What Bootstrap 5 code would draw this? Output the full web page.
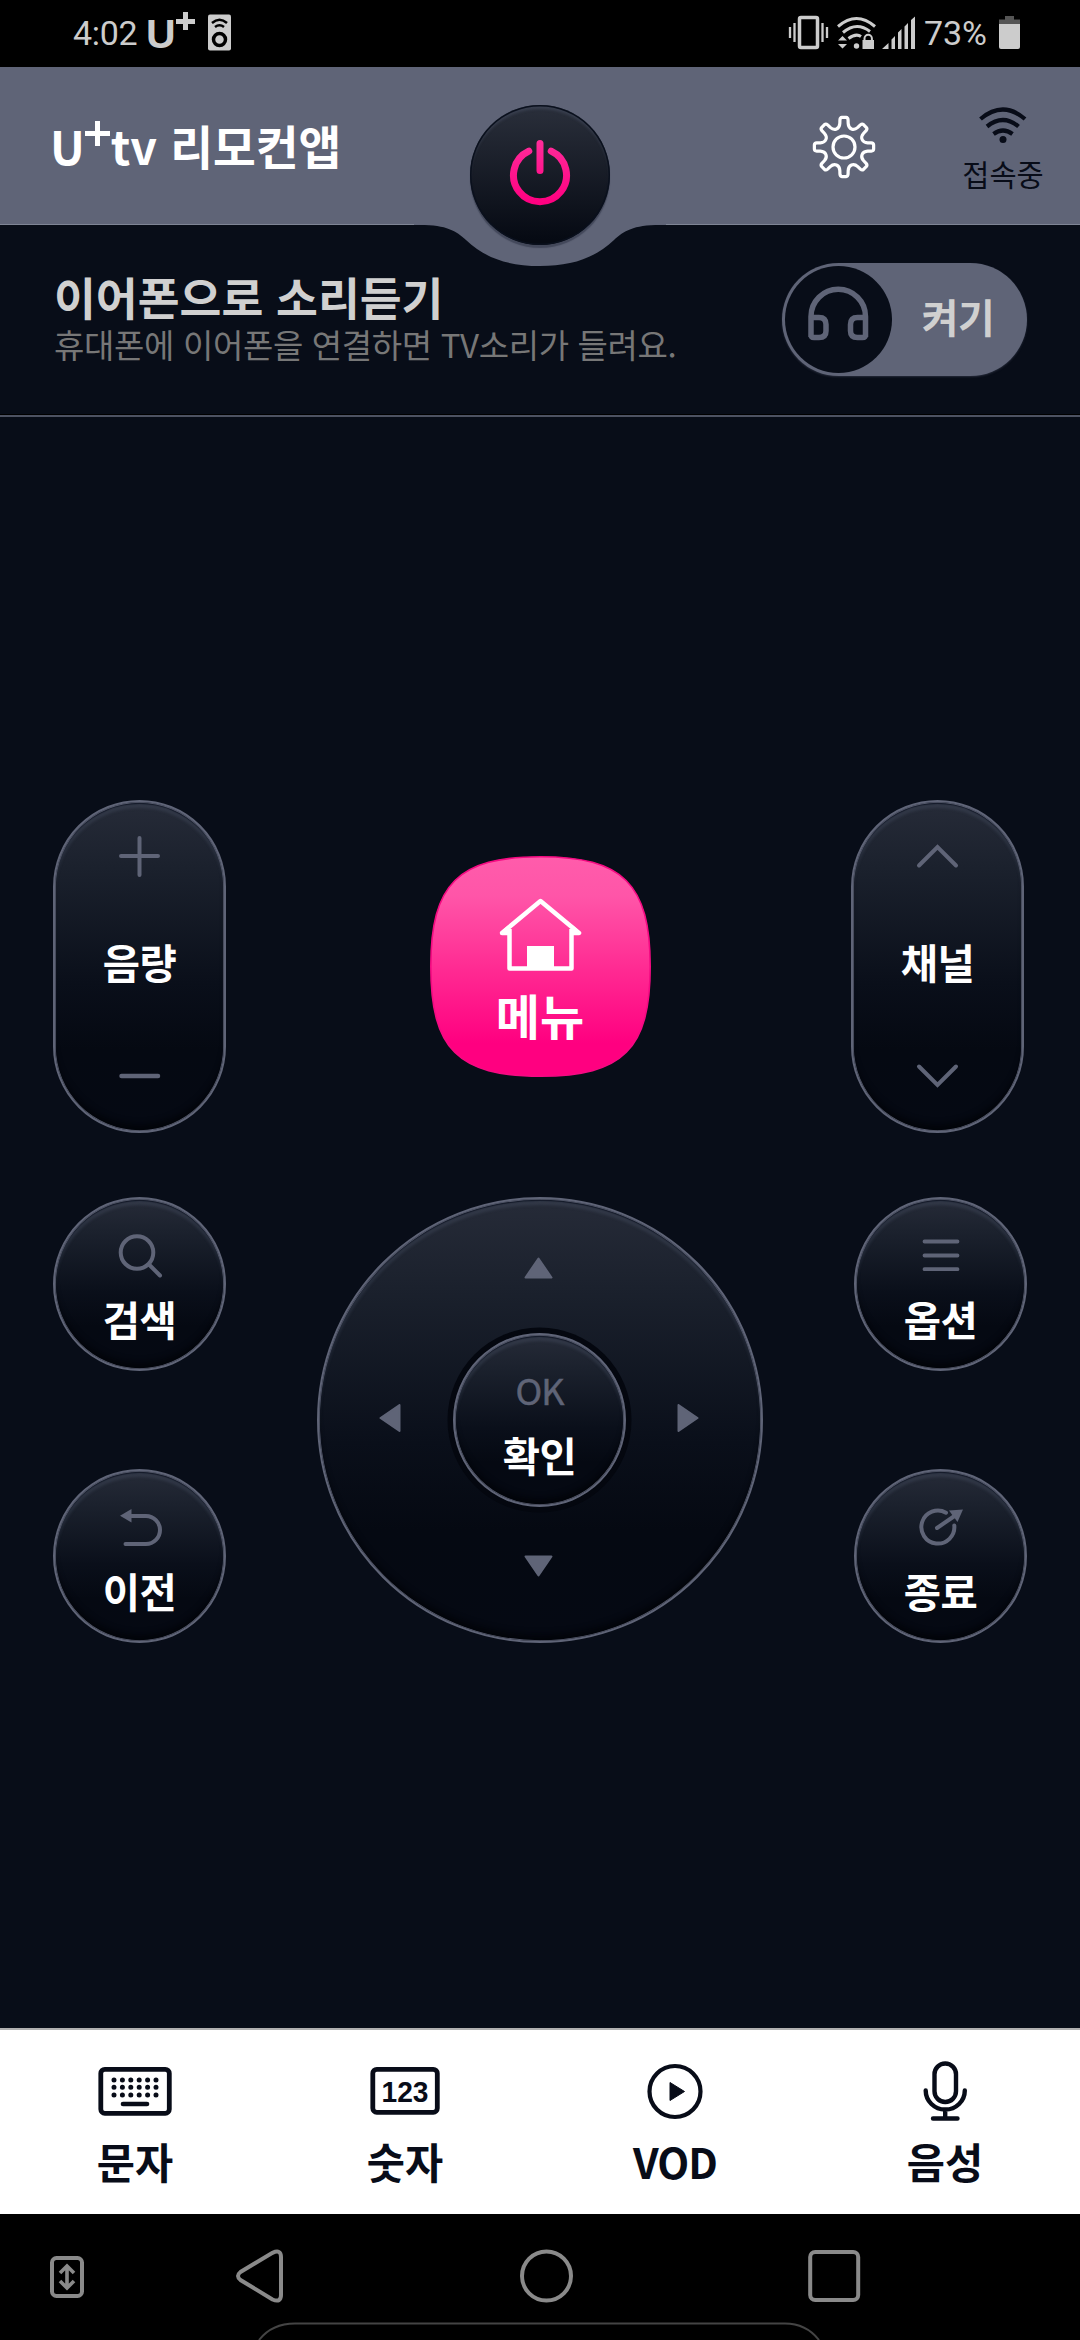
<!DOCTYPE html>
<html lang="ko">
<head>
<meta charset="utf-8">
<meta name="viewport" content="width=device-width, initial-scale=1">
<title>U+tv 리모컨앱</title>
<link href="https://cdn.jsdelivr.net/npm/bootstrap@5.3.0/dist/css/bootstrap.min.css" rel="stylesheet">
<style>
:root{--slate:#5f6477;--night:#080d18;--ink:#080c18}
body{width:1080px;height:2340px;overflow:hidden;background:var(--night);color:#fff;font-family:"Noto Sans CJK KR","Noto Sans",sans-serif}
svg{display:block;flex:none}
.statusbar{height:67px;background:#000;color:#ccc;font-family:Roboto,sans-serif;font-size:34px;line-height:66px;padding-left:73px}
.clock{width:65px;letter-spacing:-.3px}
.brand-u{font-family:"Liberation Sans",sans-serif;font-weight:700;font-size:41px;line-height:68px;width:29px;margin-left:8px}
.speaker{margin-left:13px}
.pct{width:66px;margin-left:6px;letter-spacing:-.1px}
.battery{margin:0 60px 0 9px}
.topbar{height:158px;background:var(--slate);border-bottom:1px solid #7f8595;padding-left:50px}
.app-title{font-size:46.5px;font-weight:700;line-height:60px;width:421px;margin-top:48px}
.notch{position:absolute;left:414px;top:156px;z-index:1}
.power{position:absolute;left:470px;top:38px;width:140px;height:140px;border:0;padding:0;z-index:2;border-radius:50%;background:linear-gradient(#2a2f3b,#060a13 96%);box-shadow:inset 0 0 0 1.5px #0a101d,inset 0 4px 3px rgba(90,98,120,.35),0 3px 1px rgba(48,54,72,.6)}
.gearbox{margin-left:341px;margin-top:48px}
.conn{width:100px;margin-left:77px;margin-top:40px;color:var(--ink)}
.conn span{font-size:29.5px;line-height:36px;margin-top:12px}
.earbar{height:192px;padding:38px 53px 0 54px;border-bottom:2px solid #4d5262;box-shadow:inset 0 -1px #000}
.ear-title{font-size:45.5px;font-weight:700;line-height:46px;color:#d0d0d0;margin-top:10px;white-space:nowrap}
.ear-sub{font-size:33px;line-height:36px;letter-spacing:-.36px;color:#777;white-space:nowrap;margin-top:7px}
.toggle{width:245px;height:113px;padding:3px;border-radius:57px;background:var(--slate);color:#d0d0d0;box-shadow:0 1px 2px #252a39}
.knob{width:107px;height:107px;border-radius:50%;background:var(--night)}
.toggle b{font-size:40px;font-weight:700;width:132px;line-height:101px;letter-spacing:-.5px}
.remote{height:1611px;padding:383px 53px 0}
.key{border:2px solid var(--slate);color:#fff;padding:0;background:linear-gradient(#262b38,#1b212d 20%,#0a0f1a 55%,#050912 75%,#050913);box-shadow:inset 0 0 0 .8px #555a6c,inset 0 2px 1px #141a29,inset 0 6px 3px rgba(80,88,110,.3),inset 0 -9px 6px -3px #020409;font-size:40.5px;font-weight:700;line-height:50px;letter-spacing:-.6px}
.pill{width:173px;height:333px;border-radius:87px;padding-top:25px}
.pill span{margin:50px 0 59px}
.round{width:173px;height:174px;border-radius:50%;padding-top:26px}
.round span{margin-top:9px}
.side-left{width:173px}.side-right{width:176px}
.center-col{margin-left:3px}
.gap-a{margin-top:64px}.gap-b{margin-top:98px}
.menukey{position:relative;width:221px;height:221px;margin:56px 0 120px;border:0;background:none;color:#fff;padding:39px 0 0}
.menukey .face{position:absolute;inset:0}
.menukey span{position:relative;font-size:48px;font-weight:700;line-height:56px;margin-top:13px}
.menukey .house{position:relative}
.dpad{width:446px;height:446px;border-radius:50%}
.dpad .mid{width:100%;padding:5px 59px 0 58px}
.tri-up{margin-top:56px}.tri-down{margin-bottom:62px}
.okkey{box-shadow:inset 0 0 0 .8px #555a6c,inset 0 2px 1px #141a29,inset 0 6px 3px rgba(80,88,110,.3),inset 0 -9px 6px -3px #020409,0 0 0 5.5px #04070f;width:173px;height:174px;border-radius:50%;padding-top:29px}
.okkey i{font-style:normal;font-weight:400;font-size:36px;color:var(--slate);line-height:50px;letter-spacing:-1px;-webkit-text-stroke:.5px var(--slate)}
.okkey span{margin-top:16px}
.tabs{height:186px;background:#fff;border-top:2px solid #b0b0b0;color:var(--ink)}
.tab-i{padding-top:29px}
.tab-i span{font-size:41.5px;font-weight:700;line-height:60px;margin-top:8px}
.tab-i .vod{letter-spacing:-1px}
.sysnav{height:126px;background:#000}
.sysrow{height:107px;padding:17px 0 0 49px}
</style>
<script src="https://cdn.jsdelivr.net/npm/bootstrap@5.3.0/dist/js/bootstrap.bundle.min.js"></script>
</head>
<body class="d-flex flex-column">

<header class="statusbar d-flex flex-shrink-0">
  <span class="clock">4:02</span>
  <span class="brand-u">U</span>
  <svg width="20" height="67" viewBox="175 0 20 67"><path d="M176 21.500H195M185.500 12V30" stroke="#ccc" stroke-width="5"/></svg>
  <svg class="speaker" width="23" height="67" viewBox="208 0 23 67">
    <rect x="208" y="14.500" width="23" height="36" rx="2" fill="#ccc"/>
    <g fill="none" stroke="#000" stroke-width="2.500"><path d="M212 23Q219.500 16.500 227 23M215 27Q219.500 23.500 224 27"/><circle cx="219.500" cy="39.500" r="6" stroke-width="3.500"/></g>
  </svg>
  <svg class="ms-auto" width="130" height="67" viewBox="788 0 130 67">
    <rect x="799.500" y="17.500" width="18" height="30" rx="1.500" fill="none" stroke="#ccc" stroke-width="3.500"/>
    <path d="M790 27V38M794.500 23V42M822.500 23V42M827 27V38" stroke="#ccc" stroke-width="2.300"/>
    <g fill="none" stroke="#ccc" stroke-width="3"><path d="M838 26.500Q856.500 10.500 875 26.500M843 32.500Q856.500 21 870 31.500M848.500 38.500Q856 33 861 36.500"/></g>
    <circle cx="856.500" cy="46" r="2.700" fill="#ccc"/>
    <path d="M838 40.500L842.500 36L847 40.500ZM838 44L842.500 48.500L847 44ZM862.500 40H874V49H862.500Z" fill="#ccc"/>
    <path d="M864.500 41V38.500a3.700 3.700 0 0 1 7.400 0V41" fill="none" stroke="#ccc" stroke-width="2"/>
    <path d="M882 49L888.500 43V49ZM891.500 49V39.500L895 36V49ZM898 49V32.500L901.500 29V49ZM904.500 49V26.500L908 23V49ZM911 49V20L915 16.500V49Z" fill="#ccc"/>
  </svg>
  <span class="pct">73%</span>
  <svg class="battery" width="21" height="67" viewBox="999 0 21 67"><path d="M999 24V19.500H1005V16H1014V19.500H1020V24Z" fill="#555"/><path d="M999 24H1020V47q0 2-2 2H1001q-2 0-2-2Z" fill="#ccc"/></svg>
</header>

<nav class="topbar position-relative d-flex flex-shrink-0">
  <h1 class="app-title d-flex mb-0"><span>U</span><svg width="26" height="60" viewBox="86 115 26 60"><path d="M86 133.500H111M98.500 121V146" stroke="#fff" stroke-width="5"/></svg><span>tv 리모컨앱</span></h1>
  <svg class="notch" width="252" height="46" viewBox="414 223 252 46"><path d="M414 222V225H420C447 225 456 231 466 240C485 258 508 266 540 266S595 258 614 240C624 231 633 225 660 225H666V222Z" fill="#5f6477"/></svg>
  <button class="power" aria-label="전원">
    <svg width="140" height="140" viewBox="470 105 140 140"><defs><linearGradient id="pk" gradientUnits="userSpaceOnUse" x1="0" x2="0" y1="140" y2="203"><stop stop-color="#ff2d9b"/><stop offset="1" stop-color="#ff0080"/></linearGradient></defs>
    <path d="M528.800 151.200A26.500 26.500 0 1 0 551.200 151.200M540 143.500V170.500" fill="none" stroke="url(#pk)" stroke-width="7" stroke-linecap="round"/></svg>
  </button>
  <svg class="gearbox" width="64" height="64" viewBox="-32 -32 64 64" fill="none" stroke="#fff" stroke-width="3.200">
    <circle r="11"/>
    <path id="gear" stroke-linejoin="round"/>
  </svg>
  <div class="conn d-flex flex-column align-items-center">
    <svg width="50" height="36" viewBox="976 107.500 50 36" fill="none" stroke="#080c18" stroke-width="4.200"><path d="M978.500 119.500Q1001 100.500 1023 119.500M985 127Q1001 114 1016.500 127M991.500 134.500Q1001 127.500 1010.500 134.500"/><circle cx="1001" cy="140" r="3.500" fill="#080c18" stroke="none"/></svg>
    <span>접속중</span>
  </div>
</nav>

<section class="earbar d-flex justify-content-between flex-shrink-0">
  <div><div class="ear-title">이어폰으로 소리듣기</div><div class="ear-sub">휴대폰에 이어폰을 연결하면 TV소리가 들려요.</div></div>
  <div class="toggle d-flex">
    <div class="knob"><svg width="107" height="107" viewBox="785 266 107 107" fill="none" stroke="#5f6477" stroke-width="5.500"><path d="M811 337V316.500A27 27 0 0 1 865.500 316.500V337M811 317.500H819Q826 317.500 826 324.500V331Q826 337.500 819 337.500H814Q811 337.500 811 334.500M865.500 317.500H857.500Q850.500 317.500 850.500 324.500V331Q850.500 337.500 857.500 337.500H862.500Q865.500 337.500 865.500 334.500"/></svg></div>
    <b class="text-center">켜기</b>
  </div>
</section>

<main class="remote d-flex justify-content-between align-items-start flex-shrink-0">
  <div class="side-left d-flex flex-column align-items-start">
    <button class="key pill d-flex flex-column align-items-center"><svg width="60" height="60" viewBox="-30 -30 60 60"><path d="M-19-1H18M-.5-19V18" stroke="#5f6477" stroke-width="4" stroke-linecap="round"/></svg><span>음량</span><svg width="60" height="60" viewBox="-30 -30 60 60"><path d="M-18.500 0H18" stroke="#5f6477" stroke-width="4.500" stroke-linecap="round"/></svg></button>
    <button class="key round gap-a d-flex flex-column align-items-center"><svg width="60" height="60" viewBox="109.500 1225 60 60" fill="none" stroke="#5f6477" stroke-width="4" stroke-linecap="round"><circle cx="136.500" cy="1252.500" r="16.300"/><path d="M148.500 1264.500L159.500 1275.500"/></svg><span>검색</span></button>
    <button class="key round gap-b d-flex flex-column align-items-center"><svg width="60" height="60" viewBox="109.500 1497 60 60" fill="none" stroke="#5f6477" stroke-width="4" stroke-linecap="round"><path d="M129 1516H145.500A14 14 0 0 1 145.500 1544H125"/><path d="M119.500 1515.700L131 1509V1522.500Z" fill="#5f6477" stroke="none"/></svg><span>이전</span></button>
  </div>

  <div class="center-col d-flex flex-column align-items-center">
    <button class="menukey d-flex flex-column align-items-center">
      <svg class="face" width="221" height="221" viewBox="0 0 221 221"><defs><linearGradient id="mg" x1="0" x2="0" y1="0" y2="1"><stop stop-color="#ff5cab"/><stop offset=".18" stop-color="#ff55a8"/><stop offset=".5" stop-color="#ff2c93"/><stop offset=".85" stop-color="#ff0080"/></linearGradient></defs><path d="M.8 110.500C.8 28 28 .8 110.500 .8S220.200 28 220.200 110.500S193 220.200 110.500 220.200S.8 193 .8 110.500Z" fill="url(#mg)" stroke="#f50a82" stroke-width="1.600"/></svg>
      <svg class="house" width="84" height="78" viewBox="497 895 84 78" fill="none" stroke="#fff" stroke-width="4.500" stroke-linejoin="round"><path d="M508.500 929V968.500H570.500V929M508.500 933H501L539.500 901L578 933H570.500"/><path d="M499 933L508 925V934H500ZM580 933L571 925V934H579Z" fill="#fff" stroke-width="1"/><path d="M526 946H553V968H526Z" fill="#fff" stroke="none"/></svg>
      <span>메뉴</span>
    </button>
    <div class="key dpad d-flex flex-column align-items-center justify-content-between" role="group">
      <svg class="tri-up" width="32" height="26" viewBox="-14.500 -13 32 26"><path d="M0-9.500L13 9.500H-13Z" fill="#5f6477" stroke="#5f6477" stroke-width="2" stroke-linejoin="round"/></svg>
      <div class="mid d-flex justify-content-between align-items-center">
        <svg width="26" height="32" viewBox="-13 -14 26 32"><path d="M-9.500 0L9.500-13V13Z" fill="#5f6477" stroke="#5f6477" stroke-width="2" stroke-linejoin="round"/></svg>
        <button class="key okkey d-flex flex-column align-items-center"><i>OK</i><span>확인</span></button>
        <svg width="26" height="32" viewBox="-12 -14 26 32"><path d="M9.500 0L-9.500-13V13Z" fill="#5f6477" stroke="#5f6477" stroke-width="2" stroke-linejoin="round"/></svg>
      </div>
      <svg class="tri-down" width="32" height="26" viewBox="-14.500 -13 32 26"><path d="M0 9.500L13-9.500H-13Z" fill="#5f6477" stroke="#5f6477" stroke-width="2" stroke-linejoin="round"/></svg>
    </div>
  </div>

  <div class="side-right d-flex flex-column align-items-end">
    <button class="key pill d-flex flex-column align-items-center align-self-start"><svg width="60" height="60" viewBox="-30 -30 60 60"><path d="M-19 8.500L-.5-10L18 8.500" fill="none" stroke="#5f6477" stroke-width="4" stroke-linecap="round"/></svg><span>채널</span><svg width="60" height="60" viewBox="-30 -30 60 60"><path d="M-19-9.500L-.5 9L18-9.500" fill="none" stroke="#5f6477" stroke-width="4" stroke-linecap="round"/></svg></button>
    <button class="key round gap-a d-flex flex-column align-items-center"><svg width="60" height="60" viewBox="910.500 1225 60 60"><path d="M924 1241.500H957M924 1255.500H957M924 1269.200H957" stroke="#5f6477" stroke-width="3.800" stroke-linecap="round"/></svg><span>옵션</span></button>
    <button class="key round gap-b d-flex flex-column align-items-center"><svg width="60" height="60" viewBox="910.500 1497 60 60" fill="none" stroke="#5f6477" stroke-width="4" stroke-linecap="round"><path d="M945.500 1512.700A16.500 16.500 0 1 0 953.800 1525.500M936.500 1528L954 1516"/><path d="M962.500 1509.500L948.500 1510.500L957 1522Z" fill="#5f6477" stroke="none"/></svg><span>종료</span></button>
  </div>
</main>

<footer class="tabs flex-shrink-0"><div class="row g-0">
  <div class="col tab-i d-flex flex-column align-items-center"><svg width="74" height="64" viewBox="98 2059 74 64"><rect x="100.800" y="2069.300" width="68.500" height="44" rx="4" fill="none" stroke="#080c18" stroke-width="4.800"/><path d="M114 2080H160M114 2087.200H160M114 2095H160" stroke="#080c18" stroke-width="5" stroke-linecap="round" stroke-dasharray="0 8.400"/><path d="M123 2104H147" stroke="#080c18" stroke-width="4.600" stroke-linecap="round"/></svg><span>문자</span></div>
  <div class="col tab-i d-flex flex-column align-items-center"><svg width="70" height="64" viewBox="369.500 2059 70 64"><rect x="372.300" y="2069.300" width="64.500" height="43" rx="4" fill="none" stroke="#080c18" stroke-width="4.800"/><text x="404.500" y="2101.500" text-anchor="middle" textLength="47" lengthAdjust="spacingAndGlyphs" font-family="Liberation Sans" font-weight="700" font-size="30" fill="#080c18">123</text></svg><span>숫자</span></div>
  <div class="col tab-i d-flex flex-column align-items-center"><svg width="60" height="64" viewBox="645 2059 60 64"><circle cx="675" cy="2091.500" r="25.500" fill="none" stroke="#080c18" stroke-width="4.200"/><path d="M670 2082.500L684.500 2091.500L670 2100.500Z" fill="#080c18" stroke="#080c18" stroke-width="1" stroke-linejoin="round"/></svg><span class="vod">VOD</span></div>
  <div class="col tab-i d-flex flex-column align-items-center"><svg width="60" height="64" viewBox="915 2059 60 64" fill="none" stroke="#080c18" stroke-width="4.400" stroke-linecap="round"><rect x="934.500" y="2063.500" width="21.500" height="38.500" rx="10.700"/><path d="M925.700 2090.500A19.500 19 0 0 0 964.800 2090.500M945.200 2110V2118M933 2118.500H957.500"/></svg><span>음성</span></div>
</div></footer>

<div class="sysnav flex-shrink-0">
  <div class="sysrow">
    <svg width="815" height="88" viewBox="49 2231 815 88" fill="none" stroke="#8a8a8a" stroke-width="4">
      <rect x="52" y="2258" width="30" height="38" rx="4.500"/><path d="M67 2267V2287M60 2273L67 2266L74 2273M60 2281L67 2288L74 2281" stroke-width="3.600"/>
      <path d="M272.500 2252.800Q281 2249 281 2257V2295Q281 2303 272.500 2299.500L240.500 2280Q235.500 2276 240.500 2272Z"/>
      <circle cx="546.500" cy="2276" r="24.500"/>
      <rect x="810.200" y="2252" width="48" height="48" rx="5"/>
    </svg>
  </div>
  <svg width="1080" height="19" viewBox="0 2321 1080 19"><path d="M259 2340Q272 2323.500 295 2323.500H785Q806 2323.500 819 2340" fill="none" stroke="#444" stroke-width="2"/></svg>
</div>

<script>
/* Eight-tooth gear outline: one tooth, rotated by 45 degrees each time. */
(function(){
  var d='';
  function p(a,r){a=(a-90)*Math.PI/180;return (r*Math.cos(a)).toFixed(2)+' '+(r*Math.sin(a)).toFixed(2)}
  for(var k=0;k<8;k++){
    var b=k*45;
    d+=(k?'L':'M')+p(b-10,24)+'L'+p(b-8.5,27.5)+'Q'+p(b-7.5,29.7)+' '+p(b-4,29.7)+'L'+p(b+4,29.7)+'Q'+p(b+7.5,29.7)+' '+p(b+8.5,27.5)+'L'+p(b+10,24)+'C'+p(b+14,18.5)+' '+p(b+31,18.5)+' '+p(b+35,24);
  }
  document.getElementById('gear').setAttribute('d',d+'Z');
})();
</script>
</body>
</html>
